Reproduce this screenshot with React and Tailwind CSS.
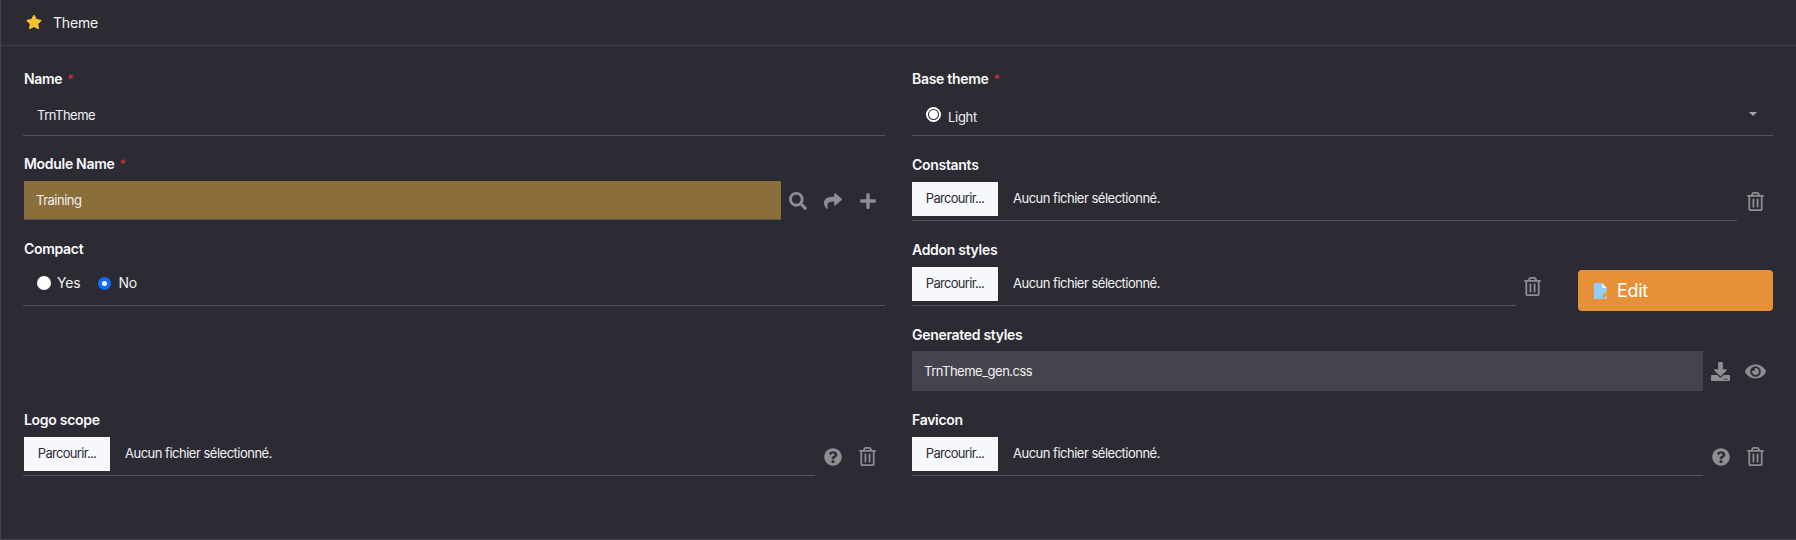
import React from "react";
import { FaStar, FaSearch, FaShare, FaPlus, FaRegTrashAlt, FaDownload, FaEye, FaQuestionCircle } from "react-icons/fa";

const Label = ({ children, req, inset }) => (
  <div className={`h-5 flex items-center text-[14px] font-semibold text-[#f8f9fb] leading-5 tracking-[-0.3px] ${inset ? "pl-px" : ""}`}>
    {children}
    {req && <span className="ml-[5px] text-[#c8363c] font-normal text-[13px] -mt-px">*</span>}
  </div>
);

const Icon = ({ I, size = 18, className = "w-[35px]" }) => (
  <div className={`${className} flex items-center justify-center text-[#8e8d93]`}>
    <I size={size} />
  </div>
);

const FileInput = ({ inset }) => (
  <div className={`flex-1 h-[39px] border-b border-[#55545d] flex items-start ${inset ? "pl-px" : ""}`}>
    <div className="w-[86px] h-[34px] bg-[#f7f8fb] text-[#2c2b33] text-[13px] tracking-[-0.7px] flex items-center justify-center">Parcourir...</div>
    <div className="ml-[15px] h-[34px] flex items-center text-[13px] tracking-[-0.5px] text-[#f1f1f3]">Aucun fichier sélectionné.</div>
  </div>
);

const Field = ({ label, req, h, inset, lower, children }) => (
  <div className={`flex flex-col gap-[7px] ${h} ${lower ? "pt-px" : ""}`}>
    <Label req={req} inset={inset}>{label}</Label>
    {children}
  </div>
);

const Edit = () => (
  <svg width="15" height="16" viewBox="0 0 15 16" className="shrink-0">
    <path d="M0 0h8l5 5v11H0z" fill="#93cbfb" />
    <path d="M8 0l5 5H8z" fill="#e8f4ff" />
    <path d="M8 15l1-3 4-4 2 2-4 4z" fill="#f39c12" />
  </svg>
);

export default function App() {
  return (
    <div className="w-[1796px] h-[540px] bg-[#2c2b33] border-l border-b border-[#45444c] font-['Inter','Liberation_Sans',sans-serif] overflow-hidden">
      <div className="h-[46px] border-b border-[#3f3e46] flex items-center pl-[25px]">
        <FaStar size={16} className="text-[#fbc02d] -mt-px" />
        <span className="ml-[11px] text-[14px] text-[#f1f1f3] tracking-[-0.2px] -mt-px">Theme</span>
      </div>
      <div className="grid grid-cols-[862px_861px] gap-x-[27px] pl-[22px] pt-[22px]">
        <div className="flex flex-col">
          <Field label="Name" req inset lower h="h-[85px]">
            <div className="h-[40px] pl-[14px] pt-px border-b border-[#55545d] flex items-center text-[13px] tracking-[-0.5px] text-[#f1f1f3]">TrnTheme</div>
          </Field>
          <Field label="Module Name" req inset lower h="h-[85px]">
            <div className="flex">
              <div className="w-[759px] h-[39px] bg-[#8c6d3c] border-b border-[#55545d] ml-px pt-px flex items-center pl-3 text-[13px] tracking-[-0.5px] text-[#f1f1f3]">Training</div>
              <div className="flex items-center h-[39px] -ml-px">
                <Icon I={FaSearch} /><Icon I={FaShare} /><Icon I={FaPlus} />
              </div>
            </div>
          </Field>
          <Field label="Compact" inset lower h="h-[172px]">
            <div className="h-[40px] border-b border-[#55545d] flex items-center pl-[14px] pb-[5px] text-[14px] tracking-[-0.2px] text-[#f1f1f3]">
              <span className="w-[14px] h-[14px] rounded-full bg-white"></span>
              <span className="ml-[6px] -mt-px">Yes</span>
              <span className="ml-[18px] w-[13px] h-[13px] rounded-full bg-[#0d6efd] flex items-center justify-center">
                <span className="w-[5px] h-[5px] rounded-full bg-white"></span>
              </span>
              <span className="ml-[7px] -mt-px">No</span>
            </div>
          </Field>
          <Field label="Logo scope" inset h="h-[85px]">
            <div className="flex">
              <FileInput inset />
              <div className="flex items-center h-[39px]">
                <Icon I={FaQuestionCircle} /><Icon I={FaRegTrashAlt} size={19} />
              </div>
            </div>
          </Field>
        </div>
        <div className="flex flex-col">
          <Field label="Base theme" req lower h="h-[87px]">
            <div className="h-[40px] border-b border-[#55545d] flex items-center pl-[14px] text-[13px] tracking-[-0.3px] text-[#f1f1f3]">
              <span className="w-[15px] h-[15px] -mt-[3px] rounded-full border-2 border-white flex items-center justify-center">
                <span className="w-[9px] h-[9px] rounded-full bg-white"></span>
              </span>
              <span className="ml-[7px] mt-[5px]">Light</span>
              <span className="ml-auto mr-[16px] -mt-[4px] w-0 h-0 border-x-4 border-x-transparent border-t-[4px] border-t-[#a5a4aa]"></span>
            </div>
          </Field>
          <Field label="Constants" h="h-[85px]">
            <div className="flex">
              <FileInput />
              <Icon I={FaRegTrashAlt} size={19} className="w-[36px] h-[39px]" />
            </div>
          </Field>
          <Field label="Addon styles" h="h-[84px]">
            <div className="flex">
              <div className="w-[604px] flex"><FileInput /></div>
              <Icon I={FaRegTrashAlt} size={19} className="w-[33px] h-[39px]" />
              <div className="ml-[29px] w-[195px] h-[41px] mt-[3px] rounded-[4px] bg-[#e69138] flex items-center pl-4 text-white text-[18px] tracking-[-0.3px]">
                <Edit />
                <span className="ml-2">Edit</span>
              </div>
            </div>
          </Field>
          <Field label="Generated styles" lower h="h-[86px]">
            <div className="flex -mt-px">
              <div className="w-[792px] h-[40px] bg-[#45444e] pt-px flex items-center pl-3 text-[13px] tracking-[-0.5px] text-[#f1f1f3]">TrnTheme_gen.css</div>
              <div className="flex items-center h-[40px]">
                <Icon I={FaDownload} size={19} className="w-[35px]" /><Icon I={FaEye} size={21} className="w-[35px]" />
              </div>
            </div>
          </Field>
          <Field label="Favicon" h="h-[85px]">
            <div className="flex">
              <FileInput />
              <div className="flex items-center h-[39px]">
                <Icon I={FaQuestionCircle} /><Icon I={FaRegTrashAlt} size={19} />
              </div>
            </div>
          </Field>
        </div>
      </div>
    </div>
  );
}
